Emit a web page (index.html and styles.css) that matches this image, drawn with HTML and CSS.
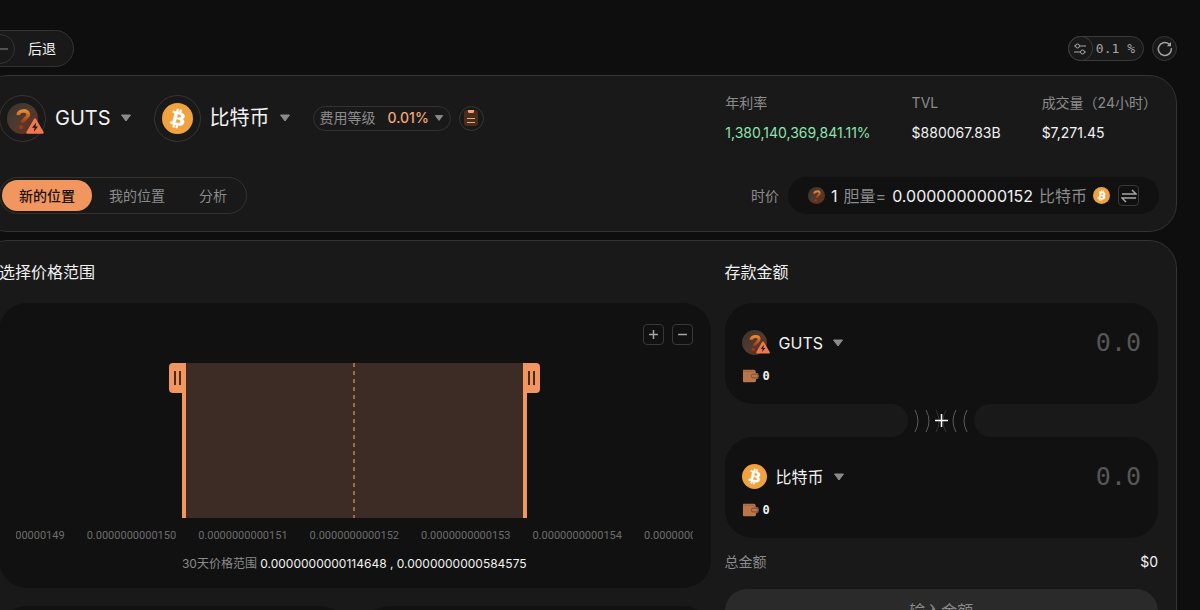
FILE: index.html
```html
<!DOCTYPE html>
<html lang="zh-CN">
<head>
<meta charset="utf-8">
<title>GUTS / 比特币</title>
<link rel="stylesheet" href="styles.css">
</head>
<body>
<svg class="defs" aria-hidden="true">
  <defs>
    <linearGradient id="guts-bg" x1="0" y1="0" x2="1" y2="1">
      <stop offset="0" stop-color="#38332f"/><stop offset="0.5" stop-color="#503a30"/><stop offset="1" stop-color="#6b2c14"/>
    </linearGradient>
    <linearGradient id="guts-mark" x1="0" y1="0" x2="0" y2="1">
      <stop offset="0" stop-color="#e9872f"/><stop offset="1" stop-color="#9c3212"/>
    </linearGradient>
    <symbol id="btc" viewBox="0 0 32 32">
      <circle cx="16" cy="16" r="16" fill="#efa23e"/>
      <path fill="#fff" stroke="#fff" stroke-width=".5" d="M23.189 14.02c.314-2.096-1.283-3.223-3.465-3.975l.708-2.84-1.728-.43-.69 2.765c-.454-.114-.92-.22-1.385-.326l.695-2.783L15.596 6l-.708 2.839c-.376-.086-.746-.17-1.104-.26l.002-.009-2.384-.595-.46 1.846s1.283.294 1.256.312c.7.175.826.638.805 1.006l-.806 3.235c.048.012.11.03.18.057l-.183-.045-1.13 4.532c-.086.212-.303.531-.793.41.018.025-1.256-.313-1.256-.313l-.858 1.978 2.25.561c.418.105.828.215 1.231.318l-.715 2.872 1.727.43.708-2.84c.472.127.93.245 1.378.357l-.706 2.828 1.728.43.715-2.866c2.948.558 5.164.333 6.097-2.333.752-2.146-.037-3.385-1.588-4.192 1.13-.26 1.98-1.003 2.207-2.538zm-3.95 5.538c-.533 2.147-4.148.986-5.32.695l.95-3.805c1.172.293 4.929.872 4.37 3.11zm.535-5.569c-.487 1.953-3.495.96-4.47.717l.86-3.45c.975.243 4.118.696 3.61 2.733z"/>
    </symbol>
    <symbol id="guts" viewBox="0 0 32 32">
      <circle cx="16" cy="16" r="16" fill="url(#guts-bg)"/>
      <path d="M11.5 12.5c.5-5 10-6 10.500-1 .3 4-5.500 4.500-6 9" fill="none" stroke="url(#guts-mark)" stroke-width="3.800"/>
      <circle cx="14.500" cy="25" r="2.200" fill="#a8330f"/>
    </symbol>
    <symbol id="warn" viewBox="0 0 18 16">
      <path d="M9 1.500 16.500 14.500H1.500Z" fill="#f0784f" stroke="#f0784f" stroke-width="2.500" stroke-linejoin="round"/>
      <path d="M10.300 4.500 6 9.700h2.600l-.8 4L12 8.600H9.400Z" fill="#1c1512"/>
    </symbol>
    <symbol id="caret" viewBox="0 0 12 8"><path d="M1.500 1h9L6 7Z" fill="#8b8b8b" stroke="#8b8b8b" stroke-linejoin="round"/></symbol>
    <symbol id="wallet" viewBox="0 0 18 16">
      <path d="M1.500 1.500h11a2 2 0 0 1 2 2v1.500h1.500a1.500 1.500 0 0 1 1.500 1.500v3a1.500 1.500 0 0 1-1.500 1.500h-1v1.500a2 2 0 0 1-2 2h-11A1 1 0 0 1 1 13.500V2a.5.500 0 0 1 .5-.5Z" fill="#b9754c"/>
      <path d="M1 3h12" stroke="#9c6240"/>
      <rect x="10" y="6" width="7" height="4" rx="1.500" fill="#b9754c" stroke="#7c4a2e"/>
    </symbol>
  </defs>
</svg>
<main class="shell">
  <header class="topbar">
    <button class="back" type="button">
      <span class="back-icon"><svg width="16" height="12" viewBox="0 0 16 12"><path d="M16 6H1M6 1 1 6l5 5" fill="none" stroke="#8b8b8b"/></svg></span>
      后退
    </button>
    <div class="tools">
      <button class="slippage" type="button">
        <span class="slippage-icon"><svg width="14" height="12" viewBox="0 0 14 12"><g fill="none" stroke="#a5a5a5"><circle cx="4.500" cy="3" r="2"/><path d="M1 3h1.500M6.500 3H13M1 9h6.500M11.500 9H13"/><circle cx="9.500" cy="9" r="2"/></g></svg></span>
        0.1 %
      </button>
      <button class="round" type="button" aria-label="刷新"><svg width="16" height="16" viewBox="0 0 16 16"><path d="M14.300 7.200A6.500 6.500 0 1 1 11.800 2.800L13 4" fill="none" stroke="#a5a5a5" stroke-width="1.500"/><path d="M14 1v4.200H9.800Z" fill="#a5a5a5"/></svg></button>
    </div>
  </header>

  <section class="card summary">
    <div class="pair">
      <button class="token" type="button"><span class="ring"><svg class="coin-lg"><use href="#guts"/></svg><svg class="warn-lg"><use href="#warn"/></svg></span>GUTS<svg class="caret"><use href="#caret"/></svg></button>
      <button class="token" type="button"><span class="ring"><svg class="coin-lg"><use href="#btc"/></svg></span>比特币<svg class="caret"><use href="#caret"/></svg></button>
      <button class="fee" type="button">费用等级<strong>0.01%</strong><svg class="caret-sm"><use href="#caret"/></svg></button>
      <button class="round" type="button" aria-label="详情"><svg width="16" height="18" viewBox="0 0 16 18"><rect x="1" y="1" width="14" height="16" rx="3" fill="#4a2c1b"/><path d="M5 1h6v1.500A1.500 1.500 0 0 1 9.500 4h-3A1.500 1.500 0 0 1 5 2.500Z" fill="#f3a474"/><path d="M4 9.500h8M4 13.500h8" stroke="#f3a474"/></svg></button>
    </div>
    <dl class="stats">
      <div><dt>年利率</dt><dd class="green">1,380,140,369,841.11%</dd></div>
      <div><dt>TVL</dt><dd>$880067.83B</dd></div>
      <div><dt>成交量（24小时）</dt><dd>$7,271.45</dd></div>
    </dl>
    <nav class="tabs">
      <button class="tab active" type="button">新的位置</button>
      <button class="tab" type="button">我的位置</button>
      <button class="tab" type="button">分析</button>
    </nav>
    <div class="price">
      <span class="price-label">时价</span>
      <div class="price-pill">
        <svg class="coin-sm"><use href="#guts"/></svg>
        <b>1</b><span>胆量=</span><b class="rate">0.0000000000152</b><span>比特币</span>
        <svg class="coin-sm"><use href="#btc"/></svg>
        <button class="square swap" type="button" aria-label="互换"><svg width="16" height="14" viewBox="0 0 16 14"><path d="M1 5h14L11 1M15 9H1l4 4" fill="none" stroke="#a5a5a5" stroke-width="1.500"/></svg></button>
      </div>
    </div>
  </section>

  <section class="card work">
    <div class="range-col">
      <h2>选择价格范围</h2>
      <div class="panel chart">
        <div class="zoom">
          <button class="square" type="button" aria-label="放大"><svg width="9" height="9" viewBox="0 0 9 9"><path d="M0 4.500h9M4.500 0v9" stroke="#a5a5a5" stroke-width="1.500"/></svg></button>
          <button class="square" type="button" aria-label="缩小"><svg width="9" height="9" viewBox="0 0 9 9"><path d="M0 4.500h9" stroke="#a5a5a5" stroke-width="1.500"/></svg></button>
        </div>
        <div class="range"><span class="handle low"></span><span class="mid"></span><span class="handle high"></span></div>
        <div class="axis"><span>0.0000000000149</span><span>0.0000000000150</span><span>0.0000000000151</span><span>0.0000000000152</span><span>0.0000000000153</span><span>0.0000000000154</span><span>0.0000000000155</span></div>
        <p class="history">30天价格范围 <b>0.0000000000114648 , 0.0000000000584575</b></p>
      </div>
      <div class="bounds"><div class="panel"></div><div class="panel"></div></div>
    </div>
    <form class="deposit">
      <h2>存款金额</h2>
      <div class="panel asset">
        <div class="asset-row">
          <button class="token small" type="button"><span class="coin-box"><svg class="coin-md"><use href="#guts"/></svg><svg class="warn-sm"><use href="#warn"/></svg></span>GUTS<svg class="caret"><use href="#caret"/></svg></button>
          <input class="amount" type="text" placeholder="0.0" aria-label="GUTS 金额">
        </div>
        <div class="balance"><svg class="wallet"><use href="#wallet"/></svg>0</div>
      </div>
      <div class="joint">
        <span class="side left"></span>
        <span class="bridge"><svg width="56" height="26" viewBox="0 0 56 26"><g fill="none" stroke="#5c5c5c"><path d="M2 2q6 11 0 22M13 2q6 11 0 22M54 2q-6 11 0 22M43 2q-6 11 0 22"/><path d="M23 2q6 11 0 22M33 2q-6 11 0 22" stroke="#333"/></g><path d="M22 12.500h13M28.500 6v13" stroke="#fff" stroke-width="1.500"/></svg></span>
        <span class="side right"></span>
      </div>
      <div class="panel asset">
        <div class="asset-row">
          <button class="token small" type="button"><svg class="coin-md"><use href="#btc"/></svg>比特币<svg class="caret"><use href="#caret"/></svg></button>
          <input class="amount" type="text" placeholder="0.0" aria-label="比特币 金额">
        </div>
        <div class="balance"><svg class="wallet"><use href="#wallet"/></svg>0</div>
      </div>
      <div class="total"><span>总金额</span><b>$0</b></div>
      <button class="submit" type="button">输入金额</button>
    </form>
  </section>
</main>
</body>
</html>
```
FILE: styles.css
```css
* { box-sizing: border-box; }
body {
  margin: 0;
  background: #0e0e0e;
  color: #f2f2f2;
  font-family: Inter, "Noto Sans CJK SC", sans-serif;
  font-size: 14px;
  line-height: 20px;
}
button, input { font: inherit; color: inherit; background: none; border: 0; padding: 0; margin: 0; }
button { display: flex; align-items: center; cursor: pointer; white-space: nowrap; }
h2, dl, dd, p { margin: 0; }
b, strong, h2 { font-weight: 400; }
svg { display: block; flex: none; }
.defs { position: absolute; width: 0; height: 0; }

.shell { height: 100vh; overflow: hidden; padding: 30px 23px 0 0; }
.topbar, .card { margin-left: -20px; }
.topbar { display: flex; justify-content: space-between; align-items: center; margin-bottom: 8px; }
.back { height: 37px; gap: 13px; padding: 0 17px 0 4px; border: 1px solid #35322f; border-radius: 19px; background: #191919; }
.back-icon { display: grid; place-items: center; width: 30px; height: 30px; border: 1px solid #35322f; border-radius: 50%; }
.tools { display: flex; gap: 8px; }
.slippage { height: 25px; gap: 4px; padding-right: 8px; border: 1px solid #3a3a3a; border-radius: 13px; background: #191919; color: #a5a5a5; font: 13px "DejaVu Sans Mono", monospace; }
.slippage-icon { display: grid; place-items: center; width: 23px; height: 23px; border-radius: 50%; box-shadow: 0 0 0 1px #3a3a3a; }
.round { justify-content: center; width: 25px; height: 25px; border: 1px solid #3a3734; border-radius: 50%; background: #191919; }

.card { border: 1px solid #35322f; border-radius: 28px; background: #191919; }
.summary {
  display: grid;
  grid-template-columns: 1fr auto;
  row-gap: 34px;
  align-items: center;
  padding: 17px 17px 17px 18px;
  margin-bottom: 8px;
}
.pair { display: flex; align-items: center; gap: 12px; }
.token { gap: 9px; font-size: 20px; margin-right: 10px; }
.ring { position: relative; display: grid; place-items: center; width: 47px; height: 47px; border: 1px solid #3a342f; border-radius: 50%; }
.coin-lg { width: 31px; height: 31px; }
.warn-lg { position: absolute; right: 1px; bottom: 7px; width: 18px; height: 16px; }
.caret { width: 12px; height: 8px; }
.caret-sm { width: 10px; height: 8px; }
.fee { height: 25px; gap: 5px; padding: 0 6px; border: 1px solid #35322f; border-radius: 13px; color: #8b8b8b; }
.fee strong { margin-left: 7px; color: #f0a878; font-weight: 500; }
.fee + .round { margin-left: -4px; }
.stats { display: flex; gap: 41px; padding-right: 2px; }
dt { margin-bottom: 10px; color: #8b8b8b; white-space: nowrap; }
.green { color: #8fe3ae; }
.tabs { display: flex; justify-self: start; padding: 2px; height: 37px; border: 1px solid #35322f; border-radius: 19px; }
.tab { padding: 0 17px; border-radius: 16px; color: #8b8b8b; }
.tab.active { background: #f2965f; color: #1a120d; font-weight: 500; }
.price { display: flex; justify-content: flex-end; align-items: center; gap: 9px; color: #8b8b8b; }
.price-pill { display: flex; align-items: center; gap: 6px; height: 37px; padding: 0 20px; border-radius: 19px; background: #111; font-size: 16px; }
.price-pill b { color: #f2f2f2; }
.coin-sm { width: 17px; height: 17px; }
.square { justify-content: center; width: 21px; height: 21px; border: 1px solid #3a3734; border-radius: 4px; }
.swap { margin-left: 2px; }

.work { display: grid; grid-template-columns: minmax(0, 711fr) minmax(0, 433fr); gap: 14px; padding: 20px 18px; }
h2 { margin-bottom: 20px; font-size: 16px; line-height: 22px; }
.panel { border-radius: 28px; background: #111; }
.chart { display: flex; flex-direction: column; align-items: center; height: 285px; padding: 21px 18px 0 17px; }
.zoom { display: flex; align-self: flex-end; gap: 8px; margin-bottom: 18px; }
.range { position: relative; width: 51%; height: 155px; border: solid #f2965f; border-width: 0 4px; background: #3d2c26; }
.handle { position: absolute; top: 0; display: flex; justify-content: center; width: 17px; height: 30px; background: #f2965f; }
.low { right: 100%; border-radius: 4px 0 0 4px; }
.high { left: 100%; border-radius: 0 4px 4px 0; }
.handle::before { content: ""; width: 3px; height: 14px; margin-top: 8px; border: solid #4a2a1a; border-width: 0 2px; }
.mid { position: absolute; left: 50%; width: 2px; height: 100%; margin-left: -1px; background: repeating-linear-gradient(#a3694b 0 4px, transparent 4px 8px); }
.axis { display: flex; justify-content: center; gap: 22px; width: 100%; margin-top: 8px; overflow: hidden; color: #6d6d6d; font: 11px/20px Roboto, sans-serif; }
.history { margin-top: 8px; color: #8b8b8b; font-size: 12px; }
.history b { color: #f2f2f2; }
.bounds { display: grid; grid-template-columns: 1fr 1fr; gap: 14px; margin-top: 18px; }
.bounds .panel { height: 120px; }

.asset { height: 101px; padding: 26px 17px 0; }
.asset-row { display: flex; justify-content: space-between; align-items: center; height: 27px; }
.small { flex: none; gap: 9px; font-size: 16px; margin: 0; }
.coin-box { position: relative; width: 28px; }
.coin-md { width: 25px; height: 25px; }
.warn-sm { position: absolute; right: 0; bottom: 1px; width: 14px; height: 13px; }
.amount { flex: 1; width: 0; min-width: 0; color: #f2f2f2; font: 25px "DejaVu Sans Mono", monospace; text-align: right; outline: 0; }
.amount::placeholder { color: #565656; opacity: 1; }
.balance { display: flex; align-items: center; gap: 4px; margin-top: 10px; font: bold 12px/20px "DejaVu Sans Mono", monospace; }
.wallet { width: 17px; height: 16px; }
.joint { display: flex; height: 33px; }
.side { z-index: 1; flex: 1; background: #191919; }
.left { border-radius: 0 17px 17px 0; }
.right { border-radius: 17px 0 0 17px; }
.bridge { display: grid; place-items: center; flex: 0 0 100px; margin: 0 -17px; background: #111; }
.total { display: flex; justify-content: space-between; margin: 14px 0 17px; color: #8b8b8b; }
.total b { color: #f2f2f2; }
.submit { justify-content: center; width: 100%; height: 44px; border-radius: 22px; background: #2a2a2a; color: #8b8b8b; font-size: 16px; }
```
